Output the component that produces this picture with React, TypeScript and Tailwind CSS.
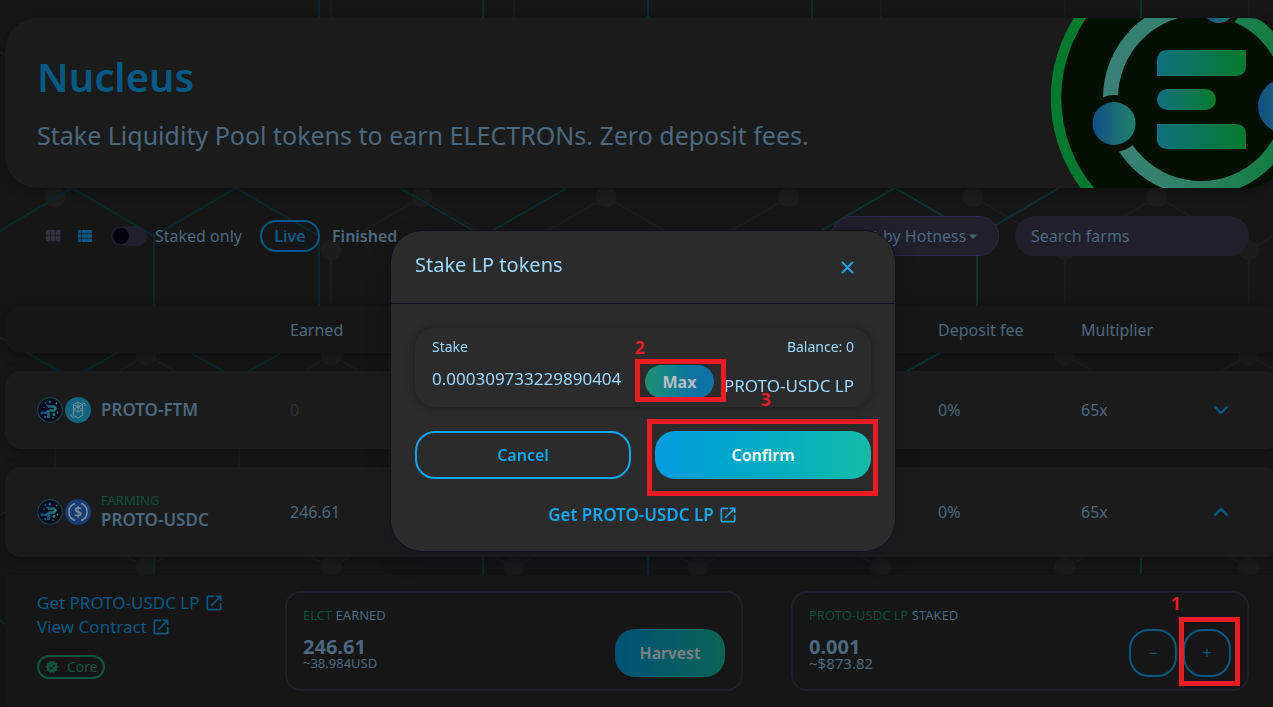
import React from 'react';
import { MdOpenInNew, MdVerified } from 'react-icons/md';

interface Farm {
  name: string;
  farming: boolean;
  earned: string;
  fee: string;
  multiplier: string;
  open: boolean;
}

const farms: Farm[] = [
  { name: 'PROTO-FTM', farming: false, earned: '0', fee: '0%', multiplier: '65x', open: false },
  { name: 'PROTO-USDC', farming: true, earned: '246.61', fee: '0%', multiplier: '65x', open: true },
];

const columns = 'grid grid-cols-[253px_1fr_143px_132px_68px] items-center pl-8';
const shadow = 'shadow-[0_2px_12px_rgba(0,0,0,0.35)]';

const nodes = [
  [55, 197], [422, 197], [606, 197], [789, 197], [973, 197], [1157, 197],
  [331, 250], [1065, 250], [1249, 250],
  [146, 355], [331, 355], [1065, 355], [1249, 355],
  [146, 567], [331, 567], [514, 567], [698, 567], [881, 567], [1065, 567], [1249, 567],
];

const Backdrop: React.FC = () => (
  <svg className="absolute inset-0 -z-10" width="1273" height="707" viewBox="0 0 1273 707" fill="none" aria-hidden="true">
    <g stroke="#1c1c1c" strokeWidth="2">
      <path d="M331 0V18M514 0V18M881 0V18M1065 0V18M1249 0V18" />
      <path d="M422 197L331 250V305M422 197L514 250M606 197L698 250M606 197L514 250M789 197L698 250" />
      <path d="M973 197L1065 250V305M1157 197L1065 250M1157 197L1249 250V305M1249 250L1273 236" />
      <path d="M120 371L146 355L175 371M305 371L331 355L359 371M1065 355L1093 371M1221 371L1249 355L1273 369" />
      <path d="M55 449V467M239 449V467" />
      <path d="M127 557L146 567L166 557M311 557L331 567L350 557M494 557L514 567L534 557M678 557L698 567L718 557M861 557L881 567M1065 567L1085 557M1230 557L1249 567" />
    </g>
    <g fill="#1c1c1c">
      {nodes.map(([x, y]) => (
        <circle key={`${x}-${y}`} cx={x} cy={y} r="10.5" />
      ))}
    </g>
    <g stroke="#08282d" strokeWidth="2">
      <path d="M319 0V18M0 52L5 55M0 231L72 188L154 236V331M154 236L236 188L319 236V331" />
      <path d="M0 337L5 340M27 353L72 378L117 353M191 353L236 378L281 353M0 515L5 512M154 557V575M0 620L5 625" />
    </g>
    <g stroke="#0a2d2e" strokeWidth="2">
      <path d="M483 0V18M648 0V18M812 0V18M400 188L483 236L567 188M483 557V575M648 557V575" />
    </g>
    <g stroke="#0b3431" strokeWidth="2">
      <path d="M1141 0V18M812 236L895 188L977 236V331M977 236L1059 188M940 353L907 371M1141 557V575" />
    </g>
  </svg>
);

const ElectronLogo: React.FC = () => (
  <svg className="shrink-0" width="230" height="170" viewBox="1051 18 230 170" aria-hidden="true">
    <defs>
      <linearGradient id="ring" gradientUnits="userSpaceOnUse" x1="1110" x2="1300" y1="98" y2="98">
        <stop offset="0" stopColor="#3a8177" />
        <stop offset="0.4" stopColor="#2f8068" />
        <stop offset="1" stopColor="#0a7c35" />
      </linearGradient>
      <linearGradient id="bar" gradientUnits="userSpaceOnUse" x1="1157" x2="1246" y1="0" y2="0">
        <stop offset="0" stopColor="#116f80" />
        <stop offset="1" stopColor="#047b2a" />
      </linearGradient>
      <linearGradient id="midBar" gradientUnits="userSpaceOnUse" x1="1157" x2="1216" y1="0" y2="0">
        <stop offset="0" stopColor="#116f80" />
        <stop offset="1" stopColor="#047b2a" />
      </linearGradient>
      <linearGradient id="dot">
        <stop offset="0" stopColor="#114d86" />
        <stop offset="1" stopColor="#22826c" />
      </linearGradient>
    </defs>
    <circle cx="1201" cy="98" r="145" fill="#020f02" stroke="#047a2e" strokeWidth="10.5" />
    <circle cx="1201" cy="98" r="90.5" fill="none" stroke="url(#ring)" strokeWidth="15" />
    <circle cx="1114" cy="123.5" r="28.5" fill="#020f02" />
    <circle cx="1218.5" cy="7" r="22" fill="#020f02" />
    <circle cx="1285" cy="106" r="34" fill="#020f02" />
    <circle cx="1114" cy="123.5" r="21.5" fill="url(#dot)" />
    <circle cx="1218.5" cy="7" r="16" fill="url(#dot)" />
    <circle cx="1285" cy="106" r="27" fill="url(#dot)" />
    <path d="M1168 50H1246V65Q1246 76 1235 76H1157V61Q1157 50 1168 50Z" fill="url(#bar)" />
    <rect x="1157" y="89" width="59" height="21" rx="10.5" fill="url(#midBar)" />
    <path d="M1157 124H1235Q1246 124 1246 135V149H1168Q1157 149 1157 138Z" fill="url(#bar)" />
  </svg>
);

const ProtoToken: React.FC = () => (
  <svg width="26" height="26" viewBox="0 0 26 26" fill="none" aria-hidden="true">
    <defs>
      <linearGradient id="proto" gradientUnits="userSpaceOnUse" x1="6" x2="20" y1="0" y2="0">
        <stop offset="0" stopColor="#0f4a86" />
        <stop offset="1" stopColor="#1d8570" />
      </linearGradient>
    </defs>
    <circle cx="13" cy="13" r="12.3" fill="#050818" stroke="#12454f" strokeWidth="1.2" />
    <g stroke="url(#proto)" strokeWidth="2.6" strokeLinejoin="round">
      <path d="M11 9.500H17L18.500 11.500L17 13.500H12.500L11.500 15V21" />
      <path d="M6.500 15.800H9.500L11.500 14" />
      <path d="M11 9.500L9.500 7.500" strokeWidth="1.6" />
    </g>
    <g fill="#14558c">
      <circle cx="8.5" cy="6" r="1.1" />
      <circle cx="12.8" cy="5" r="1.4" />
      <circle cx="5" cy="15.8" r="1.6" />
      <circle cx="7" cy="10.5" r="0.8" />
      <circle cx="8" cy="20" r="1.1" />
    </g>
    <g fill="#1d8570">
      <circle cx="19.5" cy="6.5" r="0.9" />
      <circle cx="17" cy="17.5" r="1.5" />
      <circle cx="20.5" cy="15.5" r="0.9" />
      <circle cx="16" cy="21" r="0.8" />
    </g>
  </svg>
);

const FtmToken: React.FC = () => (
  <svg width="26" height="26" viewBox="0 0 26 26" fill="none" aria-hidden="true">
    <circle cx="13" cy="13" r="13" fill="#12647f" />
    <g stroke="#6f8f9c" strokeWidth="1" strokeLinejoin="round">
      <path d="M8.5 7.5L13 5L17.5 7.5V18.500L13 21L8.500 18.500Z" />
      <path d="M8.500 7.500L17.500 12.500M17.500 7.500L8.500 12.500M13 5V15M8.500 12.500L13 15L17.500 12.500" />
      <path d="M17 5.500L20 7V9M9 20.500L6 19V17" />
    </g>
  </svg>
);

const UsdcToken: React.FC = () => (
  <svg width="26" height="26" viewBox="0 0 26 26" fill="none" aria-hidden="true">
    <circle cx="13" cy="13" r="13" fill="#163e74" />
    <path d="M10 4.500A9 9 0 0 0 10 21.500M16 4.500A9 9 0 0 1 16 21.500" stroke="#7f8b9b" strokeWidth="1.600" />
    <text x="13" y="18" textAnchor="middle" fontSize="14" fontFamily="Noto Sans, sans-serif" fontWeight="600" fill="#7f8b9b">$</text>
  </svg>
);

const Chevron: React.FC<{ up: boolean }> = ({ up }) => (
  <svg width="16" height="10" viewBox="0 0 16 10" fill="none" stroke="#045a84" strokeWidth="2.400" strokeLinecap="round" strokeLinejoin="round" aria-hidden="true">
    <path d={up ? 'M2 8L8 2L14 8' : 'M2 2L8 8L14 2'} />
  </svg>
);

const Toolbar: React.FC = () => (
  <div className="mt-7 flex h-10 items-center px-8 text-[#4c687f]">
    <button aria-label="Card view" className="ml-2 text-[#35323f]">
      <svg width="16" height="12" viewBox="0 0 16 12" fill="currentColor">
        {[1, 6, 11].map((x) => [0, 6].map((y) => (
          <rect key={`${x}-${y}`} x={x} y={y} width="4.400" height="5.400" rx="1" />
        )))}
      </svg>
    </button>
    <button aria-label="Table view" className="ml-4 text-[#045a84]">
      <svg width="16" height="12" viewBox="0 0 16 12" fill="currentColor">
        {[0, 4.3, 8.6].map((y) => (
          <g key={y}>
            <rect x="1" y={y} width="3.400" height="3.400" rx="0.600" />
            <rect x="5" y={y} width="10" height="3.400" rx="0.600" />
          </g>
        ))}
      </svg>
    </button>
    <label className="ml-[18px] flex items-center gap-2">
      <input type="checkbox" className="peer sr-only" />
      <span className="flex h-5 w-9 items-center rounded-full bg-[#211f2c] px-0.5">
        <span className="h-4 w-4 rounded-full bg-[#05040c]" />
      </span>
      <span className="w-[89px] whitespace-nowrap">Staked only</span>
    </label>
    <button className="ml-4 h-8 w-[60px] rounded-full border-2 border-[#045a84] font-semibold text-[#045a84]">Live</button>
    <button className="ml-3 font-semibold">Finished</button>
    <div className="relative ml-auto">
      <select aria-label="Sort by" className="h-10 w-[168px] appearance-none rounded-[20px] border border-[#30284a] bg-[#211f2c] pl-4">
        <option>Sort by Hotness</option>
      </select>
      <svg className="pointer-events-none absolute right-[22px] top-[18px]" width="8" height="5" viewBox="0 0 8 5" fill="#4c687f" aria-hidden="true">
        <path d="M0 0.500H8L4 5Z" />
      </svg>
    </div>
    <input type="text" aria-label="Search farms" placeholder="Search farms" className="ml-4 h-10 w-[234px] rounded-[20px] bg-[#211f2c] px-4 placeholder:text-[#4c687f]" />
  </div>
);

const FarmTable: React.FC = () => (
  <table className="mt-[50px] block text-[#4c687f]">
    <thead className="block">
      <tr className={`${columns} ${shadow} h-[47px] rounded-2xl bg-[#161616] text-left`}>
        <td />
        <th className="font-normal">Earned</th>
        <th className="font-normal">Deposit fee</th>
        <th className="font-normal">Multiplier</th>
        <td />
      </tr>
    </thead>
    <tbody className="block">
      {farms.map((farm) => (
        <tr key={farm.name} className={`${columns} ${shadow} mt-[18px] rounded-2xl bg-[#1b1b1b] ${farm.farming ? 'h-[90px]' : 'h-[78px]'}`}>
          <td className="flex items-center gap-0.5">
            <ProtoToken />
            {farm.farming ? <UsdcToken /> : <FtmToken />}
            <div className="ml-2">
              {farm.farming && <p className="text-[13px] leading-4 text-[#0b5138]">FARMING</p>}
              <p className="text-[17px] font-semibold leading-6">{farm.name}</p>
            </div>
          </td>
          <td className={farm.earned === '0' ? 'text-[#302e36]' : ''}>{farm.earned}</td>
          <td>{farm.fee}</td>
          <td>{farm.multiplier}</td>
          <td>
            <button aria-label={farm.open ? 'Hide details' : 'Show details'} className="block">
              <Chevron up={farm.open} />
            </button>
          </td>
        </tr>
      ))}
    </tbody>
  </table>
);

/* Red walkthrough marker: frame around the control plus its step number */
const Mark: React.FC<{ step: string; box: string; label: string }> = ({ step, box, label }) => (
  <>
    <span className={`pointer-events-none absolute z-10 border-[5px] border-[#ed1c24] ${box}`} />
    <span className={`pointer-events-none absolute z-10 font-['Open_Sans',sans-serif] text-lg font-bold leading-5 text-[#ed1c24] ${label}`}>{step}</span>
  </>
);

const Details: React.FC = () => (
  <section className={`${shadow} mt-[18px] flex flex-1 items-start bg-[#161616] px-8 pb-4 pt-4 text-[#4c687f]`}>
    <div className="flex w-[248px] shrink-0 flex-col items-start text-[#045a84]">
      <a href="#get-lp" className="flex h-6 items-center gap-1 text-[17px]">Get PROTO-USDC LP <MdOpenInNew size={20} /></a>
      <a href="#contract" className="flex h-6 items-center gap-1 text-[17px]">View Contract <MdOpenInNew size={20} /></a>
      <span className="mt-4 flex h-6 w-[68px] items-center gap-2 rounded-full border-2 border-[#0b5640] pl-1.5 text-sm text-[#0b5640]">
        <MdVerified size={14} className="shrink-0" /> Core
      </span>
    </div>
    <div className="flex h-[100px] flex-1 items-end justify-between rounded-2xl border-2 border-[#211f2c] px-4 pb-3">
      <div className="self-start pt-3">
        <p className="text-[13px] leading-5"><span className="text-[#0b5138]">ELCT</span> EARNED</p>
        <p className="mt-3 text-xl font-bold leading-5">246.61</p>
        <p className="text-[13px] leading-3">~38.984USD</p>
      </div>
      <button className="h-12 w-[110px] rounded-[20px] bg-linear-to-r from-[#035276] to-[#0d6355] font-semibold text-[#808386]">Harvest</button>
    </div>
    <div className="ml-12 flex h-[100px] flex-1 items-end justify-between rounded-2xl border-2 border-[#211f2c] px-4 pb-3">
      <div className="self-start pt-3">
        <p className="text-[13px] leading-5"><span className="text-[#0b5138]">PROTO-USDC LP</span> STAKED</p>
        <p className="mt-3 text-xl font-bold leading-5">0.001</p>
        <p className="text-[15px] leading-3">~$873.82</p>
      </div>
      <div className="flex gap-1.5 text-[#045a84]">
        <button className="h-12 w-12 rounded-[20px] border-2 border-[#045a84]">−</button>
        <div className="relative">
          <button className="h-12 w-12 rounded-[20px] border-2 border-[#045a84]">+</button>
          <Mark step="1" box="-left-1 -top-3 h-[69px] w-[61px]" label="-left-3 -top-9" />
        </div>
      </div>
    </div>
  </section>
);

const StakeModal: React.FC = () => (
  <div className="fixed inset-0 flex items-start justify-center pl-[13px] pt-[230px]">
    <div role="dialog" aria-labelledby="stake-title" className="w-[506px] rounded-[32px] border border-[#100f1c] bg-[#2b2b2b] text-[#9bd8ff] shadow-[0_8px_24px_rgba(14,14,44,0.2)]">
      <div className="flex h-[73px] items-center justify-between border-b border-[#100f1c] pl-6 pr-[41px]">
        <h2 id="stake-title" className="pb-1 text-xl">Stake LP tokens</h2>
        <button aria-label="Close" className="text-[#0fa8f0]">
          <svg width="13" height="13" viewBox="0 0 13 13" stroke="currentColor" strokeWidth="1.800">
            <path d="M1 1L12 12M12 1L1 12" />
          </svg>
        </button>
      </div>
      <div className="p-6">
        <div className="h-[79px] rounded-[20px] px-[17px] pt-2 shadow-[0_0_8px_rgba(0,0,0,0.35)]">
          <div className="flex justify-between text-sm leading-[22px]">
            <label htmlFor="stake-amount">Stake</label>
            <span>Balance: 0</span>
          </div>
          <div className="mt-[7px] flex h-[33px] text-[17px]">
            <input id="stake-amount" type="text" defaultValue="0.000309733229890404" className="h-[26px] w-0 flex-1 bg-transparent" />
            <div className="relative">
              <button className="h-[33px] w-[69px] rounded-full bg-linear-to-r from-[#1f9070] to-[#0e72a4] to-70% text-base font-bold text-[#b9bec0]">Max</button>
              <Mark step="2" box="-left-2.5 -top-1.5 h-[43px] w-[91px]" label="-left-2.5 -top-7" />
            </div>
            <span className="w-[140px] self-end whitespace-nowrap text-right leading-6">PROTO-USDC LP</span>
          </div>
        </div>
        <div className="mt-6 grid grid-cols-2 gap-6 font-semibold">
          <button className="h-12 rounded-[20px] border-2 border-[#0fa8f0] text-[#0fa8f0]">Cancel</button>
          <div className="relative">
            <button className="h-12 w-full rounded-[20px] bg-linear-to-r from-[#059bdc] to-[#15bba8] text-white">Confirm</button>
            <Mark step="3" box="-left-2 -top-3 h-[77px] w-[231px]" label="left-[106px] -top-[42px]" />
          </div>
        </div>
        <a href="#get-lp" className="mt-6 flex h-6 items-center justify-center gap-1 text-[17px] font-semibold text-[#0fa8f0]">
          Get PROTO-USDC LP <MdOpenInNew size={20} />
        </a>
      </div>
    </div>
  </div>
);

const App: React.FC = () => {
  return (
    <div className="relative isolate min-h-screen overflow-hidden bg-[#161616] font-['Noto_Sans',sans-serif] text-base">
      <Backdrop />
      <main className="-mr-2 flex min-h-screen flex-col pl-[5px] pt-[18px]">
        <header className={`${shadow} flex h-[170px] items-center justify-between overflow-hidden rounded-[32px] bg-[#1b1b1b] pl-8`}>
          <div>
            <h1 className="text-[40px] font-semibold leading-[42px] text-[#045a84]">Nucleus</h1>
            <p className="mt-[22px] whitespace-nowrap text-[25px] leading-[30px] text-[#4c687f]">Stake Liquidity Pool tokens to earn ELECTRONs. Zero deposit fees.</p>
          </div>
          <ElectronLogo />
        </header>
        <Toolbar />
        <FarmTable />
        <Details />
      </main>
      <StakeModal />
    </div>
  );
};

export default App;
